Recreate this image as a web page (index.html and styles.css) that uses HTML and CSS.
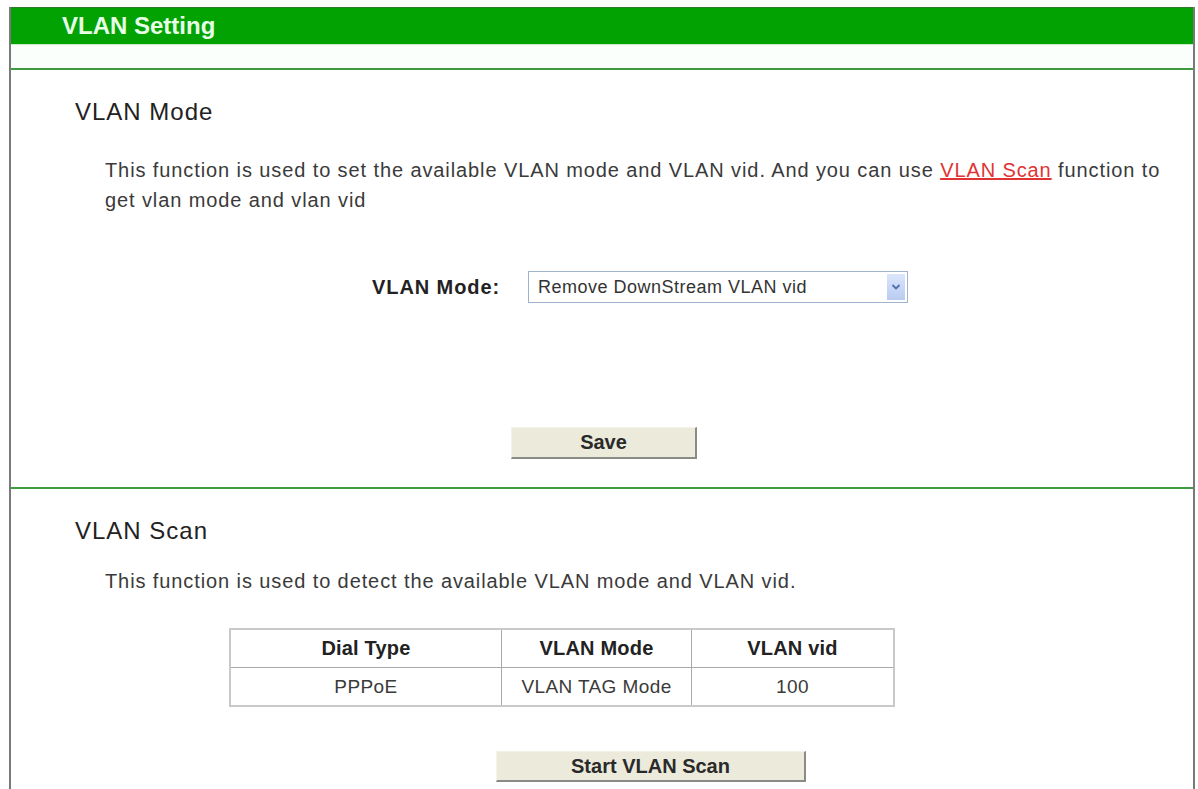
FILE: index.html
```html
<!DOCTYPE html>
<html lang="en">
<head>
    <meta charset="UTF-8">
    <meta name="viewport" content="width=device-width, initial-scale=1.0">
    <title>VLAN Setting</title>
    <link rel="stylesheet" href="styles.css">
</head>
<body>
    <div class="panel">
        <div class="title-bar">VLAN Setting</div>
        <div class="title-gap"></div>

        <div class="block">
            <h2>VLAN Mode</h2>
            <p class="desc">This function is used to set the available VLAN mode and VLAN vid. And you can use <a href="#scan">VLAN Scan</a> function to<br>get vlan mode and vlan vid</p>
            <div class="form-row">
                <label for="mode">VLAN Mode:</label>
                <div class="select" id="mode">
                    <span>Remove DownStream VLAN vid</span>
                    <span class="arrow">
                        <svg width="10" height="8" viewBox="0 0 10 8"><path d="M1.5 2 L5 5.5 L8.5 2" fill="none" stroke="#4d6fae" stroke-width="1.8"/></svg>
                    </span>
                </div>
            </div>
            <div class="actions save-row">
                <button class="btn save">Save</button>
            </div>
        </div>

        <div class="block scan" id="scan">
            <h2>VLAN Scan</h2>
            <p class="desc">This function is used to detect the available VLAN mode and VLAN vid.</p>
            <table class="scan-table">
                <thead>
                    <tr>
                        <th class="c1">Dial Type</th>
                        <th class="c2">VLAN Mode</th>
                        <th class="c3">VLAN vid</th>
                    </tr>
                </thead>
                <tbody>
                    <tr>
                        <td>PPPoE</td>
                        <td>VLAN TAG Mode</td>
                        <td>100</td>
                    </tr>
                </tbody>
            </table>
            <div class="actions scan-row">
                <button class="btn start">Start VLAN Scan</button>
            </div>
        </div>
    </div>
</body>
</html>
```

FILE: styles.css
```css
body {
	font-family: "Liberation Sans", Arial, sans-serif;
	background-color: #fff;
	margin: 0;
	padding: 7px 3px 0 9px;
	color: #3a3a3a;
	overflow: hidden;
}
.panel {
	border-left: 2px solid #7a7a7a;
	border-right: 2px solid #7a7a7a;
	min-height: 800px;
}
.title-bar {
	background-color: #02a202;
	border-top: 1px solid #2f7a2f;
	height: 36px;
	line-height: 36px;
	padding-left: 51px;
	font-size: 24px;
	font-weight: bold;
	color: #e6ffe6;
}
.title-gap {
	height: 23px;
	background-color: #fbfffb;
	border-top: 1px solid #c8efc8;
	border-bottom: 2px solid #3f9b3f;
}
.block h2 {
	margin: 28px 0 0 64px;
	font-size: 24px;
	font-weight: normal;
	letter-spacing: 1px;
	line-height: 28px;
	color: #222;
}
.desc {
	margin: 29px 13px 0 94px;
	font-size: 20px;
	letter-spacing: 0.9px;
	line-height: 30px;
}
.desc a {
	color: #e03434;
}
.form-row {
	display: flex;
	align-items: center;
	margin-top: 56px;
}
.form-row label {
	width: 489px;
	margin-right: 28px;
	text-align: right;
	font-size: 20px;
	font-weight: bold;
	letter-spacing: 0.9px;
	color: #222;
}
.select {
	width: 369px;
	height: 30px;
	border: 1px solid #9fb3cc;
	display: flex;
	align-items: center;
	justify-content: space-between;
	padding-left: 9px;
	font-size: 18px;
	letter-spacing: 0.5px;
	color: #333;
}
.select .arrow {
	width: 18px;
	height: 26px;
	margin-right: 2px;
	background: linear-gradient(#dce6fb, #b9cbf1);
	display: flex;
	align-items: center;
	justify-content: center;
}
.actions {
	display: flex;
}
.save-row {
	margin: 124px 0 0 500px;
	padding-bottom: 28px;
}
.btn {
	font-family: "Liberation Sans", Arial, sans-serif;
	font-size: 20px;
	font-weight: bold;
	color: #2a2a2a;
	background-color: #eceadb;
	border: 1px solid #f4f3ea;
	border-right: 2px solid #8a8a86;
	border-bottom: 2px solid #8a8a86;
	height: 32px;
	padding: 0;
}
.save {
	width: 186px;
}
.start {
	width: 310px;
	height: 31px;
}
.scan {
	border-top: 2px solid #3f9b3f;
}
.scan .desc {
	margin-top: 21px;
}
.scan-table {
	margin: 32px 0 0 218px;
	border-collapse: collapse;
	border: 2px solid #c9c9c9;
	font-size: 19px;
	letter-spacing: 0.4px;
	text-align: center;
}
.scan-table th, .scan-table td {
	border: 1px solid #a9a9a9;
	height: 37px;
	padding: 0;
}
.scan-table th {
	font-size: 20px;
	font-weight: bold;
	letter-spacing: 0.2px;
	color: #222;
}
.c1 {
	width: 270px;
}
.c2 {
	width: 189px;
}
.c3 {
	width: 201px;
}
.scan-row {
	margin: 44px 0 0 485px;
}
```
